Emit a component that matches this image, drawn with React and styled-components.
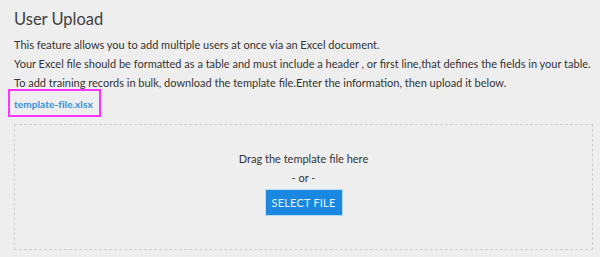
import React from "react"
import styled, { createGlobalStyle } from "styled-components"

const GlobalStyle = createGlobalStyle`
  html, body {
    margin: 0;
    padding: 0;
    background: #eeeeee;
  }
  body {
    font-family: "Lato", "Liberation Sans", sans-serif;
    color: #3a3a3a;
  }
`

const Page = styled.div`
  padding: 7px 8px 0 14px;
`

const Title = styled.h2`
  margin: 0 0 4px;
  font-size: 16.5px;
  font-weight: 400;
  line-height: 24px;
  color: #404040;
`

const Paragraph = styled.p`
  margin: 0;
  font-size: 11px;
  line-height: 19px;
  color: #333333;
`

const LinkBox = styled.div`
  width: fit-content;
  margin: -3px 0 0 -6px;
  padding: 2px 6px 2px 4px;
  border: 2px solid #ff33ff;
  line-height: 17px;
`

const TemplateLink = styled.a`
  font-size: 10px;
  font-weight: 700;
  letter-spacing: 0.1px;
  color: #2f8fdc;
  text-decoration: none;
`

const DropZone = styled.div`
  margin: 7px 0 0 0;
  width: 579px;
  height: 126px;
  border: 1px dashed #cfcfcf;
  display: flex;
  flex-direction: column;
  align-items: center;
  padding-top: 27px;
  box-sizing: border-box;
`

const DropText = styled.div`
  font-size: 11px;
  line-height: 14px;
  color: #333333;
  margin-bottom: ${props => props.gap}px;
`

const SelectButton = styled.button`
  width: 78px;
  height: 27px;
  background: #1a88e1;
  border: 1px solid #b8dbf7;
  color: #e4f1fd;
  font-family: "Lato", "Liberation Sans", sans-serif;
  font-size: 11px;
  letter-spacing: 0.2px;
  cursor: pointer;
`

export default function App() {
  return (
    <>
      <GlobalStyle />
      <Page>
        <Title>User Upload</Title>
        <Paragraph>
          This feature allows you to add multiple users at once via an Excel document.
        </Paragraph>
        <Paragraph>
          Your Excel file should be formatted as a table and must include a header , or first line,that defines the fields in your table.
        </Paragraph>
        <Paragraph>
          To add training records in bulk, download the template file.Enter the information, then upload it below.
        </Paragraph>
        <LinkBox>
          <TemplateLink href="#">template-file.xlsx</TemplateLink>
        </LinkBox>
        <DropZone>
          <DropText gap={5}>Drag the template file here</DropText>
          <DropText gap={4}>- or -</DropText>
          <SelectButton>SELECT FILE</SelectButton>
        </DropZone>
      </Page>
    </>
  )
}
